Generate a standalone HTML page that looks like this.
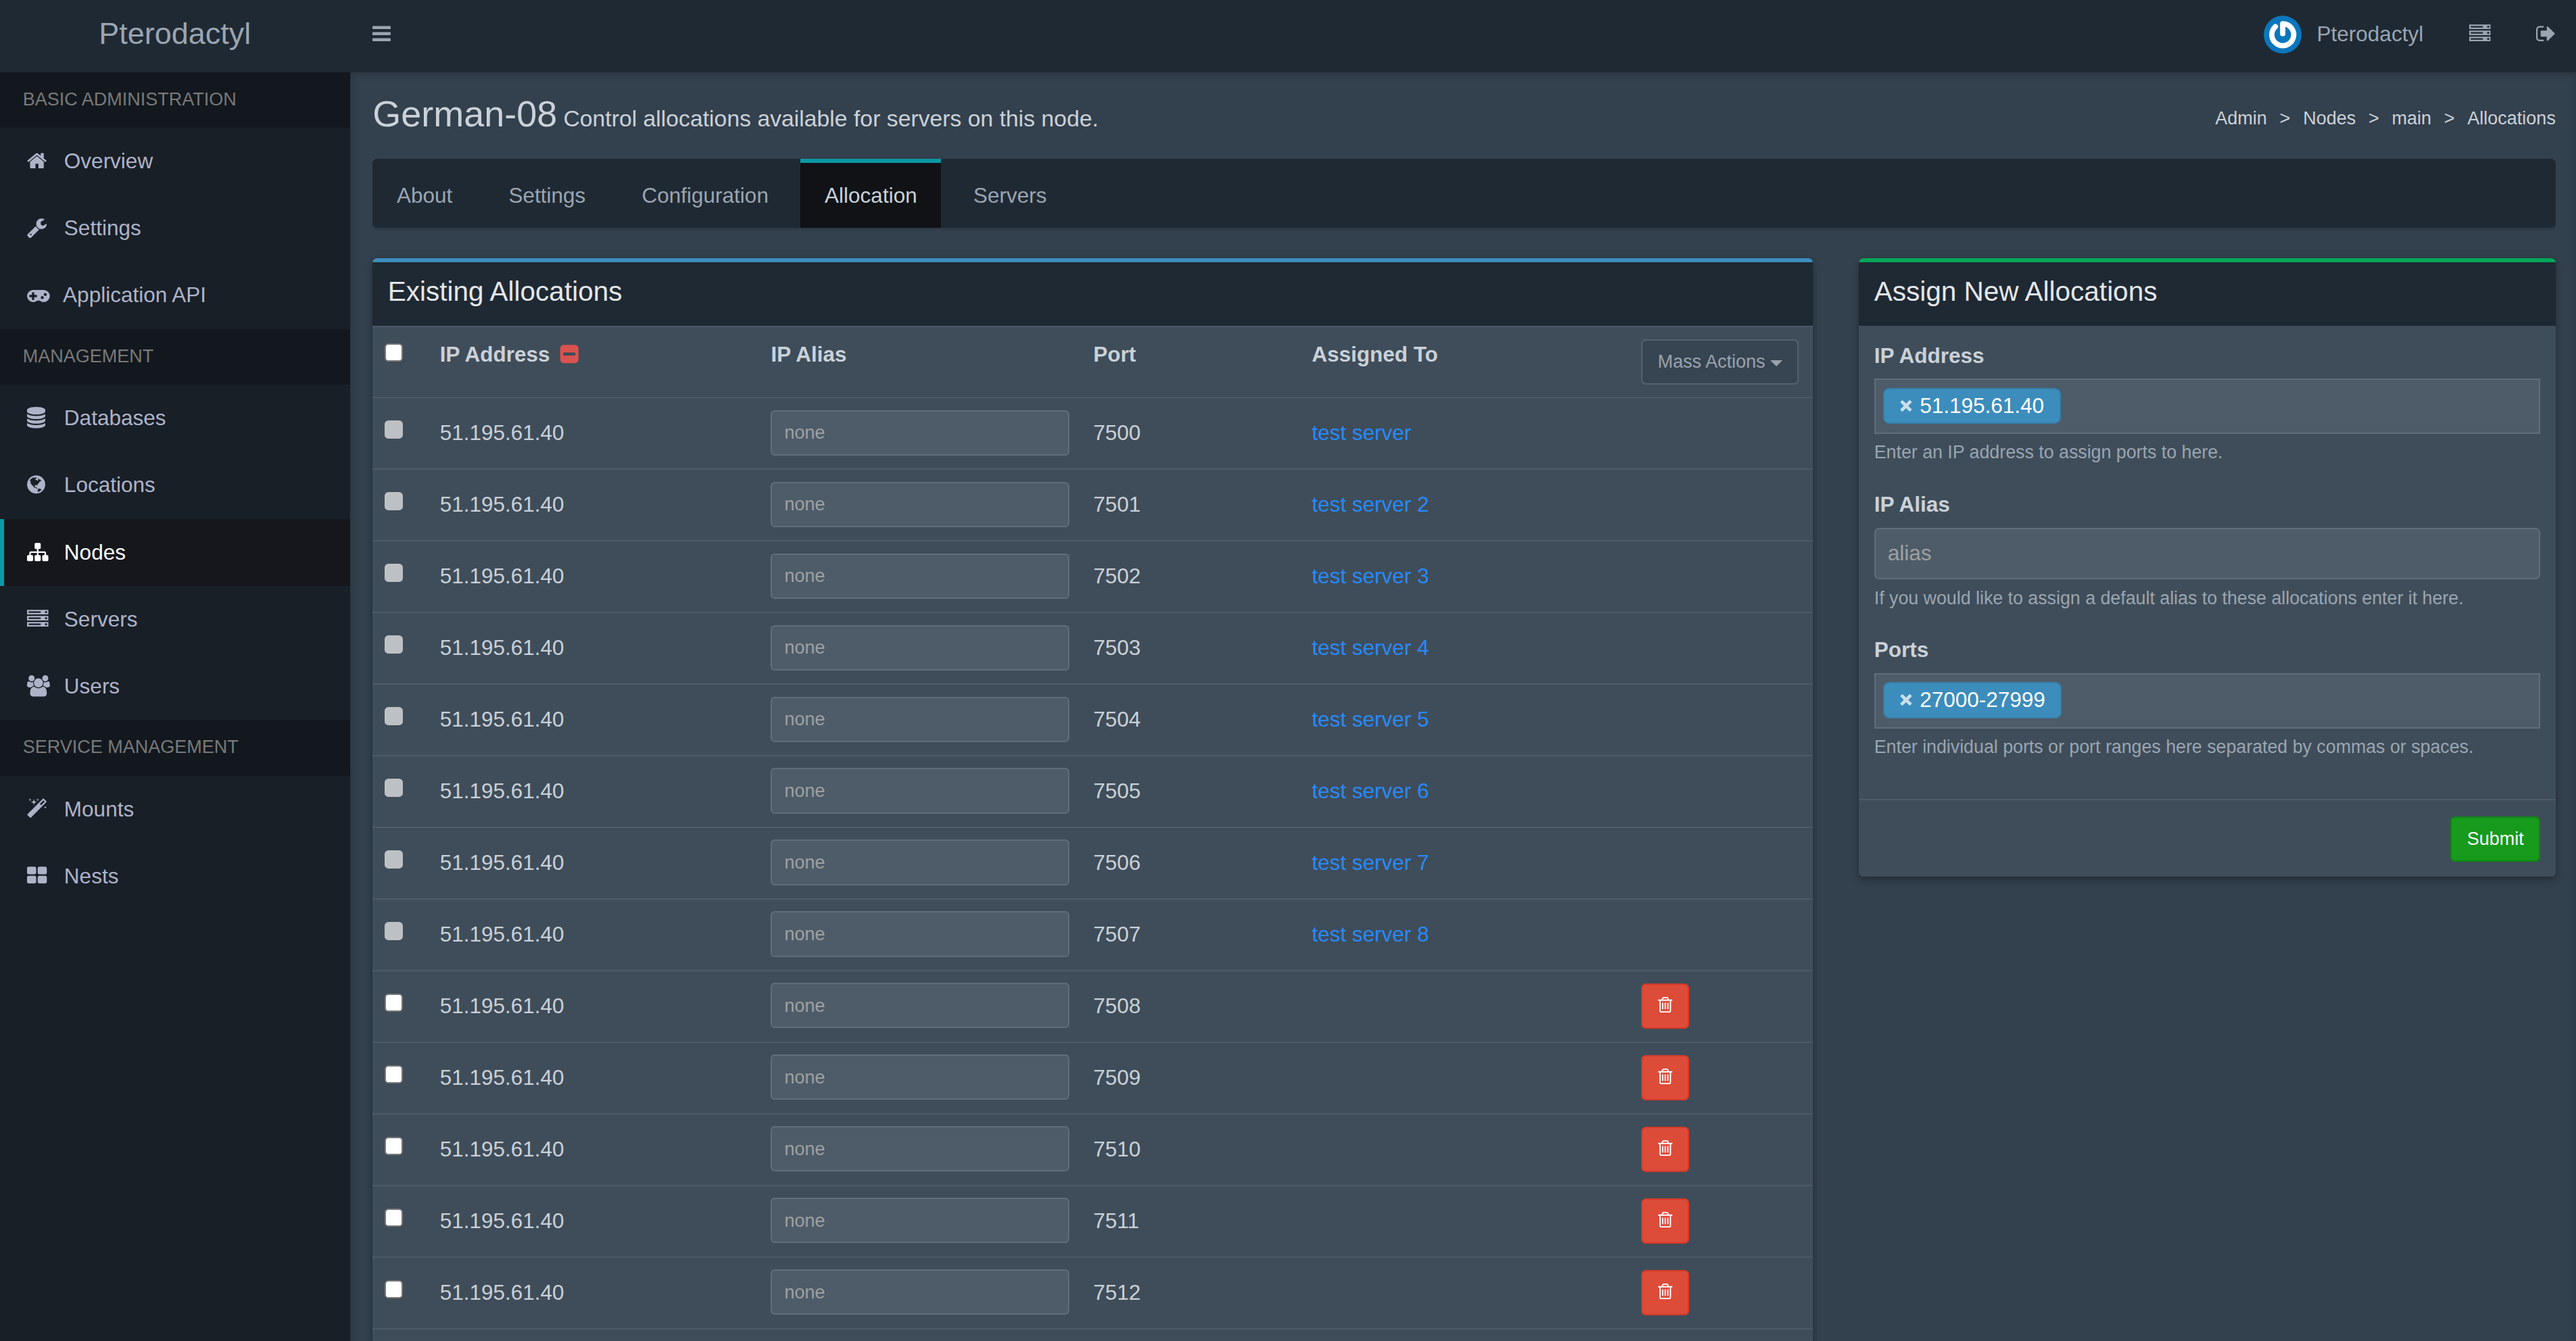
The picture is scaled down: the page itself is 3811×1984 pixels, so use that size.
<!DOCTYPE html>
<html lang="en"><head><meta charset="utf-8"><title>Pterodactyl - German-08: Allocations</title>
<style>
*{box-sizing:border-box}
html{zoom:2.25;background:#33404d;overflow:hidden}
body{margin:0;font-family:"Liberation Sans",Arial,sans-serif;font-size:14px;line-height:1.42857143;color:#cad1d8;background:#33404d;overflow:hidden;width:100%;height:881.7px;position:relative}
a{text-decoration:none;color:inherit}
ul,ol{margin:0;padding:0;list-style:none}
.fa{display:inline-block;height:1em;vertical-align:-0.142857em;fill:currentColor;overflow:visible}
.wrapper{position:absolute;left:0;top:-2.67px;width:1695.4px;height:900px}
.main-header{position:absolute;left:0;top:0;width:100%;height:50px;background:#1f2933;z-index:5}
.logo{position:absolute;left:0;top:0;width:230px;height:50px;line-height:50px;font-size:20px;text-align:center;color:#9aa5b1;padding:0 10px;display:block}
.navbar{position:absolute;left:230px;right:0;top:0;height:50px}
.sidebar-toggle{float:left;padding:15px 15px;color:#9aa5b1;font-size:14px;line-height:20px;display:block}
.navbar-custom-menu{float:right}
.nav>li{float:left}
.nav>li>a{display:block;padding:15px 15px;line-height:20px;color:#9aa5b1}
.user-image{float:left;width:25px;height:25px;border-radius:50%;margin-right:10px;margin-top:-2px}
.main-sidebar{position:absolute;left:0;top:50px;width:230px;bottom:0;background:#181f27}
.sidebar-menu>li.header{padding:10px 25px 10px 15px;font-size:12px;line-height:16.78px;color:#797979;background:rgba(14,17,21,0.51)}
.sidebar-menu>li>a{display:block;line-height:20.05px;padding:12px 5px 12px 15px;border-left:3px solid transparent;color:#aeb3c8}
.sidebar-menu>li.active>a{border-left-color:#099aa5;color:#fff;background:#15171c}
.sidebar-menu .mi{width:20px !important;margin-right:0.6px}
.content-wrapper{position:absolute;left:230px;top:50px;right:0;bottom:0;background:#33404d;box-shadow:inset 0 0 6px rgba(0,0,0,.25)}
.content-header{position:relative;padding:14.5px 15px 1.39px 15px}
.content-header>h1{margin:0;font-size:24px;font-weight:400;line-height:1.1;color:#cad1d8}
.content-header>h1>small{font-size:15px;display:inline-block;padding-left:4px;font-weight:300;color:#cad1d8;line-height:1}
.breadcrumb{position:absolute;top:15px;right:10px;font-size:12px;padding:7px 5px;line-height:1.42857143}
.breadcrumb>li{display:inline-block;color:#cad1d8}
.breadcrumb>li+li:before{content:'>\00a0';padding:0 5px;color:#cad1d8}
.content{padding:15px}
.nav-tabs-custom{margin-bottom:20px;background:#1f2933;border-radius:3px;box-shadow:0 1px 1px rgba(0,0,0,.1);overflow:hidden}
.nav-tabs{display:block}.nav-tabs:after{content:'';display:block;clear:both}
.nav-tabs>li{float:left;border-top:3px solid transparent;margin-right:5.2px}
.nav-tabs>li>a{display:block;padding:10.45px 15px;margin:0;border:1px solid transparent;color:#9aa5b1;line-height:1.42857143}
.nav-tabs>li.active{border-top-color:#099aa5}
.nav-tabs>li.active>a{background:#101216;color:#cad1d8}
.row{margin:0 -15px}
.row:after{content:"";display:block;clear:both}
.col8{float:left;width:66.66666667%;padding:0 15px}
.col4{float:left;width:33.33333333%;padding:0 15px 0 15.4px}
.box{position:relative;background:#3f4d5a;border-top:3px solid #1f2933;border-radius:3px;margin-bottom:20px;box-shadow:0 1px 3px rgba(0,0,0,.2), 0 3px 6px rgba(0,0,0,.14)}
.box.box-primary{border-top-color:#3c8dbc}
.box.box-success{border-top-color:#00a65a}
.box-header{height:41.65px;padding:10px;background:#1f2933;color:#e4e7eb;display:block;position:relative}
.box-title{display:inline-block;font-size:18px;margin:0;line-height:1;font-weight:400}
.box-body{padding:9.75px 10px 10px}
.box-body.nopad{padding:0}
.box-footer{border-top:1px solid #4d5b69;padding:10.4px 10px 10px;background:#3f4d5a;border-radius:0 0 3px 3px}
.box-footer:after{content:"";display:block;clear:both}
.pull-right{float:right}
table.table{width:100%;border-collapse:collapse;border-spacing:0;table-layout:fixed}
.table th,.table td{padding:8px;line-height:1.42857143;border-top:1px solid #4d5b69;text-align:left}
.table th{vertical-align:top;font-weight:700}
.table td{vertical-align:middle}
.form-control{display:block;width:100%;height:34px;padding:6px 12px 6px 8px;font-size:14px;line-height:1.42857143;background:#4e5c69;border:1px solid #606d7b;border-radius:3px;color:#cad1d8}
.input-sm{height:29.8px;padding:5px 10px 5px 8px;font-size:12px;line-height:1.5;border-radius:2.6px;position:relative;top:-0.45px}
.ph{color:#a0a0a0}
.btn{display:inline-block;font-weight:400;padding:6px 12px;font-size:14px;line-height:1.42857143;border:1px solid transparent;border-radius:3px;text-align:center;white-space:nowrap;vertical-align:middle}
.btn-sm{padding:5px 10px;font-size:12px;line-height:1.5}
.btn-default{background:#33404d;border-color:#606d7b;color:#cad1d8;opacity:.65}
.btn-danger{background:#dd4b39;border-color:#d73925;color:#fff}
.btn-success{background:#189a1c;border-color:#0f8513;color:#fff}
.caret{display:inline-block;width:0;height:0;margin-left:0;vertical-align:middle;border-top:4px solid;border-right:4px solid transparent;border-left:4px solid transparent}
.lnk{color:#288afb}
.cb{display:block;width:11.85px;height:11.85px;border:1px solid #767676;border-radius:2.5px;background:#fff}th .cb{margin-top:2.75px}td .cb{margin-bottom:4.9px}
.cb.dis{background:#bdc0c5;border-color:#bdc0c5}
label{display:inline-block;font-weight:700;margin-bottom:5px;color:#cad1d8}
.form-group{margin-bottom:15.8px}
p{margin:3.8px 0 10px}.select2+p{margin-top:3.7px}
.small{font-size:85%}
.text-muted{color:#9aa5b1}
.select2{height:36.4px;background:#4e5c69;border:1px solid #606d7b;padding:0 5px 5px 5px;overflow:hidden}
.choice{float:left;background:#3c8dbc;border:1px solid #367fa9;border-radius:4px;padding:1.05px 10px;color:#fff;margin-right:5px;margin-top:5.1px}
.rm{margin-right:5px;color:rgba(255,255,255,.7);font-weight:700;-webkit-text-stroke:0.45px rgba(255,255,255,.7)}
.fw{width:1.28571429em !important;text-align:center}

.w0{width:36.2px}.w1{width:217.6px}.w2{width:212px}.w3{width:143.6px}.w4{width:216.5px}.w5{width:120.8px}
.table tr{height:47.11px}

.up{position:relative;top:-0.3px}
.table tr.hr{height:46.67px}
.btn-danger.btn-sm{padding:5px 10.2px}

</style></head>
<body>
<div class="wrapper">
<header class="main-header">
  <a class="logo"><span>Pterodactyl</span></a>
  <nav class="navbar">
    <a class="sidebar-toggle"><svg class="fa " preserveAspectRatio="xMinYMid meet" style="width:0.8571em;" viewBox="0 -1536 1536 1792"><path transform="scale(1,-1)" d="M1536 192v-128q0 -26 -19 -45t-45 -19h-1408q-26 0 -45 19t-19 45v128q0 26 19 45t45 19h1408q26 0 45 -19t19 -45zM1536 704v-128q0 -26 -19 -45t-45 -19h-1408q-26 0 -45 19t-19 45v128q0 26 19 45t45 19h1408q26 0 45 -19t19 -45zM1536 1216v-128q0 -26 -19 -45 t-45 -19h-1408q-26 0 -45 19t-19 45v128q0 26 19 45t45 19h1408q26 0 45 -19t19 -45z"/></svg></a>
    <div class="navbar-custom-menu"><ul class="nav">
      <li class="user-menu"><a><svg class="user-image" viewBox="0 0 50 50"><circle cx="25" cy="25" r="25" fill="#0b76bc"/><path d="M25 23.7 V10.8 A14.4 14.4 0 1 1 15.4 14.5" stroke="#fff" stroke-width="7" stroke-linecap="round" stroke-linejoin="round" fill="none"/></svg><span>Pterodactyl</span></a></li>
      <li><a><svg class="fa " preserveAspectRatio="xMinYMid meet" style="width:1.0000em;" viewBox="0 -1536 1792 1792"><path transform="scale(1,-1)" d="M128 128h1024v128h-1024v-128zM128 640h1024v128h-1024v-128zM1696 192q0 40 -28 68t-68 28t-68 -28t-28 -68t28 -68t68 -28t68 28t28 68zM128 1152h1024v128h-1024v-128zM1696 704q0 40 -28 68t-68 28t-68 -28t-28 -68t28 -68t68 -28t68 28t28 68zM1696 1216 q0 40 -28 68t-68 28t-68 -28t-28 -68t28 -68t68 -28t68 28t28 68zM1792 384v-384h-1792v384h1792zM1792 896v-384h-1792v384h1792zM1792 1408v-384h-1792v384h1792z"/></svg></a></li>
      <li><a><svg class="fa " preserveAspectRatio="xMinYMid meet" style="width:0.9286em;" viewBox="0 -1536 1664 1792"><path transform="scale(1,-1)" d="M640 96q0 -4 1 -20t0.5 -26.5t-3 -23.5t-10 -19.5t-20.5 -6.5h-320q-119 0 -203.5 84.5t-84.5 203.5v704q0 119 84.5 203.5t203.5 84.5h320q13 0 22.5 -9.5t9.5 -22.5q0 -4 1 -20t0.5 -26.5t-3 -23.5t-10 -19.5t-20.5 -6.5h-320q-66 0 -113 -47t-47 -113v-704 q0 -66 47 -113t113 -47h288h11h13t11.5 -1t11.5 -3t8 -5.5t7 -9t2 -13.5zM1568 640q0 -26 -19 -45l-544 -544q-19 -19 -45 -19t-45 19t-19 45v288h-448q-26 0 -45 19t-19 45v384q0 26 19 45t45 19h448v288q0 26 19 45t45 19t45 -19l544 -544q19 -19 19 -45z"/></svg></a></li>
    </ul></div>
  </nav>
</header>
<aside class="main-sidebar"><ul class="sidebar-menu"><li class="header">BASIC ADMINISTRATION</li><li class=""><a><svg class="fa mi" preserveAspectRatio="xMinYMid meet" style="width:0.9286em;" viewBox="0 -1536 1664 1792"><path transform="scale(1,-1)" d="M1408 544v-480q0 -26 -19 -45t-45 -19h-384v384h-256v-384h-384q-26 0 -45 19t-19 45v480q0 1 0.5 3t0.5 3l575 474l575 -474q1 -2 1 -6zM1631 613l-62 -74q-8 -9 -21 -11h-3q-13 0 -21 7l-692 577l-692 -577q-12 -8 -24 -7q-13 2 -21 11l-62 74q-8 10 -7 23.5t11 21.5 l719 599q32 26 76 26t76 -26l244 -204v195q0 14 9 23t23 9h192q14 0 23 -9t9 -23v-408l219 -182q10 -8 11 -21.5t-7 -23.5z"/></svg> <span>Overview</span></a></li><li class=""><a><svg class="fa mi" preserveAspectRatio="xMinYMid meet" style="width:0.9286em;" viewBox="0 -1536 1664 1792"><path transform="scale(1,-1)" d="M384 64q0 26 -19 45t-45 19t-45 -19t-19 -45t19 -45t45 -19t45 19t19 45zM1028 484l-682 -682q-37 -37 -90 -37q-52 0 -91 37l-106 108q-38 36 -38 90q0 53 38 91l681 681q39 -98 114.5 -173.5t173.5 -114.5zM1662 919q0 -39 -23 -106q-47 -134 -164.5 -217.5 t-258.5 -83.5q-185 0 -316.5 131.5t-131.5 316.5t131.5 316.5t316.5 131.5q58 0 121.5 -16.5t107.5 -46.5q16 -11 16 -28t-16 -28l-293 -169v-224l193 -107q5 3 79 48.5t135.5 81t70.5 35.5q15 0 23.5 -10t8.5 -25z"/></svg> <span>Settings</span></a></li><li class=""><a><svg class="fa mi" preserveAspectRatio="xMinYMid meet" style="width:1.0714em;" viewBox="0 -1536 1920 1792"><path transform="scale(1,-1)" d="M832 448v128q0 14 -9 23t-23 9h-192v192q0 14 -9 23t-23 9h-128q-14 0 -23 -9t-9 -23v-192h-192q-14 0 -23 -9t-9 -23v-128q0 -14 9 -23t23 -9h192v-192q0 -14 9 -23t23 -9h128q14 0 23 9t9 23v192h192q14 0 23 9t9 23zM1408 384q0 53 -37.5 90.5t-90.5 37.5t-90.5 -37.5 t-37.5 -90.5t37.5 -90.5t90.5 -37.5t90.5 37.5t37.5 90.5zM1664 640q0 53 -37.5 90.5t-90.5 37.5t-90.5 -37.5t-37.5 -90.5t37.5 -90.5t90.5 -37.5t90.5 37.5t37.5 90.5zM1920 512q0 -212 -150 -362t-362 -150q-192 0 -338 128h-220q-146 -128 -338 -128q-212 0 -362 150 t-150 362t150 362t362 150h896q212 0 362 -150t150 -362z"/></svg> <span>Application API</span></a></li><li class="header">MANAGEMENT</li><li class=""><a><svg class="fa mi" preserveAspectRatio="xMinYMid meet" style="width:0.8571em;" viewBox="0 -1536 1536 1792"><path transform="scale(1,-1)" d="M768 768q237 0 443 43t325 127v-170q0 -69 -103 -128t-280 -93.5t-385 -34.5t-385 34.5t-280 93.5t-103 128v170q119 -84 325 -127t443 -43zM768 0q237 0 443 43t325 127v-170q0 -69 -103 -128t-280 -93.5t-385 -34.5t-385 34.5t-280 93.5t-103 128v170q119 -84 325 -127 t443 -43zM768 384q237 0 443 43t325 127v-170q0 -69 -103 -128t-280 -93.5t-385 -34.5t-385 34.5t-280 93.5t-103 128v170q119 -84 325 -127t443 -43zM768 1536q208 0 385 -34.5t280 -93.5t103 -128v-128q0 -69 -103 -128t-280 -93.5t-385 -34.5t-385 34.5t-280 93.5 t-103 128v128q0 69 103 128t280 93.5t385 34.5z"/></svg> <span>Databases</span></a></li><li class=""><a><svg class="fa mi" preserveAspectRatio="xMinYMid meet" style="width:0.8571em;" viewBox="0 -1536 1536 1792"><path transform="scale(1,-1)" d="M768 1408q209 0 385.5 -103t279.5 -279.5t103 -385.5t-103 -385.5t-279.5 -279.5t-385.5 -103t-385.5 103t-279.5 279.5t-103 385.5t103 385.5t279.5 279.5t385.5 103zM1042 887q-2 -1 -9.5 -9.5t-13.5 -9.5q2 0 4.5 5t5 11t3.5 7q6 7 22 15q14 6 52 12q34 8 51 -11 q-2 2 9.5 13t14.5 12q3 2 15 4.5t15 7.5l2 22q-12 -1 -17.5 7t-6.5 21q0 -2 -6 -8q0 7 -4.5 8t-11.5 -1t-9 -1q-10 3 -15 7.5t-8 16.5t-4 15q-2 5 -9.5 11t-9.5 10q-1 2 -2.5 5.5t-3 6.5t-4 5.5t-5.5 2.5t-7 -5t-7.5 -10t-4.5 -5q-3 2 -6 1.5t-4.5 -1t-4.5 -3t-5 -3.5 q-3 -2 -8.5 -3t-8.5 -2q15 5 -1 11q-10 4 -16 3q9 4 7.5 12t-8.5 14h5q-1 4 -8.5 8.5t-17.5 8.5t-13 6q-8 5 -34 9.5t-33 0.5q-5 -6 -4.5 -10.5t4 -14t3.5 -12.5q1 -6 -5.5 -13t-6.5 -12q0 -7 14 -15.5t10 -21.5q-3 -8 -16 -16t-16 -12q-5 -8 -1.5 -18.5t10.5 -16.5 q2 -2 1.5 -4t-3.5 -4.5t-5.5 -4t-6.5 -3.5l-3 -2q-11 -5 -20.5 6t-13.5 26q-7 25 -16 30q-23 8 -29 -1q-5 13 -41 26q-25 9 -58 4q6 1 0 15q-7 15 -19 12q3 6 4 17.5t1 13.5q3 13 12 23q1 1 7 8.5t9.5 13.5t0.5 6q35 -4 50 11q5 5 11.5 17t10.5 17q9 6 14 5.5t14.5 -5.5 t14.5 -5q14 -1 15.5 11t-7.5 20q12 -1 3 17q-4 7 -8 9q-12 4 -27 -5q-8 -4 2 -8q-1 1 -9.5 -10.5t-16.5 -17.5t-16 5q-1 1 -5.5 13.5t-9.5 13.5q-8 0 -16 -15q3 8 -11 15t-24 8q19 12 -8 27q-7 4 -20.5 5t-19.5 -4q-5 -7 -5.5 -11.5t5 -8t10.5 -5.5t11.5 -4t8.5 -3 q14 -10 8 -14q-2 -1 -8.5 -3.5t-11.5 -4.5t-6 -4q-3 -4 0 -14t-2 -14q-5 5 -9 17.5t-7 16.5q7 -9 -25 -6l-10 1q-4 0 -16 -2t-20.5 -1t-13.5 8q-4 8 0 20q1 4 4 2q-4 3 -11 9.5t-10 8.5q-46 -15 -94 -41q6 -1 12 1q5 2 13 6.5t10 5.5q34 14 42 7l5 5q14 -16 20 -25 q-7 4 -30 1q-20 -6 -22 -12q7 -12 5 -18q-4 3 -11.5 10t-14.5 11t-15 5q-16 0 -22 -1q-146 -80 -235 -222q7 -7 12 -8q4 -1 5 -9t2.5 -11t11.5 3q9 -8 3 -19q1 1 44 -27q19 -17 21 -21q3 -11 -10 -18q-1 2 -9 9t-9 4q-3 -5 0.5 -18.5t10.5 -12.5q-7 0 -9.5 -16t-2.5 -35.5 t-1 -23.5l2 -1q-3 -12 5.5 -34.5t21.5 -19.5q-13 -3 20 -43q6 -8 8 -9q3 -2 12 -7.5t15 -10t10 -10.5q4 -5 10 -22.5t14 -23.5q-2 -6 9.5 -20t10.5 -23q-1 0 -2.5 -1t-2.5 -1q3 -7 15.5 -14t15.5 -13q1 -3 2 -10t3 -11t8 -2q2 20 -24 62q-15 25 -17 29q-3 5 -5.5 15.5 t-4.5 14.5q2 0 6 -1.5t8.5 -3.5t7.5 -4t2 -3q-3 -7 2 -17.5t12 -18.5t17 -19t12 -13q6 -6 14 -19.5t0 -13.5q9 0 20 -10.5t17 -19.5q5 -8 8 -26t5 -24q2 -7 8.5 -13.5t12.5 -9.5l16 -8t13 -7q5 -2 18.5 -10.5t21.5 -11.5q10 -4 16 -4t14.5 2.5t13.5 3.5q15 2 29 -15t21 -21 q36 -19 55 -11q-2 -1 0.5 -7.5t8 -15.5t9 -14.5t5.5 -8.5q5 -6 18 -15t18 -15q6 4 7 9q-3 -8 7 -20t18 -10q14 3 14 32q-31 -15 -49 18q0 1 -2.5 5.5t-4 8.5t-2.5 8.5t0 7.5t5 3q9 0 10 3.5t-2 12.5t-4 13q-1 8 -11 20t-12 15q-5 -9 -16 -8t-16 9q0 -1 -1.5 -5.5t-1.5 -6.5 q-13 0 -15 1q1 3 2.5 17.5t3.5 22.5q1 4 5.5 12t7.5 14.5t4 12.5t-4.5 9.5t-17.5 2.5q-19 -1 -26 -20q-1 -3 -3 -10.5t-5 -11.5t-9 -7q-7 -3 -24 -2t-24 5q-13 8 -22.5 29t-9.5 37q0 10 2.5 26.5t3 25t-5.5 24.5q3 2 9 9.5t10 10.5q2 1 4.5 1.5t4.5 0t4 1.5t3 6q-1 1 -4 3 q-3 3 -4 3q7 -3 28.5 1.5t27.5 -1.5q15 -11 22 2q0 1 -2.5 9.5t-0.5 13.5q5 -27 29 -9q3 -3 15.5 -5t17.5 -5q3 -2 7 -5.5t5.5 -4.5t5 0.5t8.5 6.5q10 -14 12 -24q11 -40 19 -44q7 -3 11 -2t4.5 9.5t0 14t-1.5 12.5l-1 8v18l-1 8q-15 3 -18.5 12t1.5 18.5t15 18.5q1 1 8 3.5 t15.5 6.5t12.5 8q21 19 15 35q7 0 11 9q-1 0 -5 3t-7.5 5t-4.5 2q9 5 2 16q5 3 7.5 11t7.5 10q9 -12 21 -2q8 8 1 16q5 7 20.5 10.5t18.5 9.5q7 -2 8 2t1 12t3 12q4 5 15 9t13 5l17 11q3 4 0 4q18 -2 31 11q10 11 -6 20q3 6 -3 9.5t-15 5.5q3 1 11.5 0.5t10.5 1.5 q15 10 -7 16q-17 5 -43 -12zM879 10q206 36 351 189q-3 3 -12.5 4.5t-12.5 3.5q-18 7 -24 8q1 7 -2.5 13t-8 9t-12.5 8t-11 7q-2 2 -7 6t-7 5.5t-7.5 4.5t-8.5 2t-10 -1l-3 -1q-3 -1 -5.5 -2.5t-5.5 -3t-4 -3t0 -2.5q-21 17 -36 22q-5 1 -11 5.5t-10.5 7t-10 1.5t-11.5 -7 q-5 -5 -6 -15t-2 -13q-7 5 0 17.5t2 18.5q-3 6 -10.5 4.5t-12 -4.5t-11.5 -8.5t-9 -6.5t-8.5 -5.5t-8.5 -7.5q-3 -4 -6 -12t-5 -11q-2 4 -11.5 6.5t-9.5 5.5q2 -10 4 -35t5 -38q7 -31 -12 -48q-27 -25 -29 -40q-4 -22 12 -26q0 -7 -8 -20.5t-7 -21.5q0 -6 2 -16z"/></svg> <span>Locations</span></a></li><li class="active"><a><svg class="fa mi" preserveAspectRatio="xMinYMid meet" style="width:1.0000em;" viewBox="0 -1536 1792 1792"><path transform="scale(1,-1)" d="M1792 288v-320q0 -40 -28 -68t-68 -28h-320q-40 0 -68 28t-28 68v320q0 40 28 68t68 28h96v192h-512v-192h96q40 0 68 -28t28 -68v-320q0 -40 -28 -68t-68 -28h-320q-40 0 -68 28t-28 68v320q0 40 28 68t68 28h96v192h-512v-192h96q40 0 68 -28t28 -68v-320 q0 -40 -28 -68t-68 -28h-320q-40 0 -68 28t-28 68v320q0 40 28 68t68 28h96v192q0 52 38 90t90 38h512v192h-96q-40 0 -68 28t-28 68v320q0 40 28 68t68 28h320q40 0 68 -28t28 -68v-320q0 -40 -28 -68t-68 -28h-96v-192h512q52 0 90 -38t38 -90v-192h96q40 0 68 -28t28 -68 z"/></svg> <span>Nodes</span></a></li><li class=""><a><svg class="fa mi" preserveAspectRatio="xMinYMid meet" style="width:1.0000em;" viewBox="0 -1536 1792 1792"><path transform="scale(1,-1)" d="M128 128h1024v128h-1024v-128zM128 640h1024v128h-1024v-128zM1696 192q0 40 -28 68t-68 28t-68 -28t-28 -68t28 -68t68 -28t68 28t28 68zM128 1152h1024v128h-1024v-128zM1696 704q0 40 -28 68t-68 28t-68 -28t-28 -68t28 -68t68 -28t68 28t28 68zM1696 1216 q0 40 -28 68t-68 28t-68 -28t-28 -68t28 -68t68 -28t68 28t28 68zM1792 384v-384h-1792v384h1792zM1792 896v-384h-1792v384h1792zM1792 1408v-384h-1792v384h1792z"/></svg> <span>Servers</span></a></li><li class=""><a><svg class="fa mi" preserveAspectRatio="xMinYMid meet" style="width:1.0714em;" viewBox="0 -1536 1920 1792"><path transform="scale(1,-1)" d="M593 640q-162 -5 -265 -128h-134q-82 0 -138 40.5t-56 118.5q0 353 124 353q6 0 43.5 -21t97.5 -42.5t119 -21.5q67 0 133 23q-5 -37 -5 -66q0 -139 81 -256zM1664 3q0 -120 -73 -189.5t-194 -69.5h-874q-121 0 -194 69.5t-73 189.5q0 53 3.5 103.5t14 109t26.5 108.5 t43 97.5t62 81t85.5 53.5t111.5 20q10 0 43 -21.5t73 -48t107 -48t135 -21.5t135 21.5t107 48t73 48t43 21.5q61 0 111.5 -20t85.5 -53.5t62 -81t43 -97.5t26.5 -108.5t14 -109t3.5 -103.5zM640 1280q0 -106 -75 -181t-181 -75t-181 75t-75 181t75 181t181 75t181 -75 t75 -181zM1344 896q0 -159 -112.5 -271.5t-271.5 -112.5t-271.5 112.5t-112.5 271.5t112.5 271.5t271.5 112.5t271.5 -112.5t112.5 -271.5zM1920 671q0 -78 -56 -118.5t-138 -40.5h-134q-103 123 -265 128q81 117 81 256q0 29 -5 66q66 -23 133 -23q59 0 119 21.5t97.5 42.5 t43.5 21q124 0 124 -353zM1792 1280q0 -106 -75 -181t-181 -75t-181 75t-75 181t75 181t181 75t181 -75t75 -181z"/></svg> <span>Users</span></a></li><li class="header">SERVICE MANAGEMENT</li><li class=""><a><svg class="fa mi" preserveAspectRatio="xMinYMid meet" style="width:0.9286em;" viewBox="0 -1536 1664 1792"><path transform="scale(1,-1)" d="M1190 955l293 293l-107 107l-293 -293zM1637 1248q0 -27 -18 -45l-1286 -1286q-18 -18 -45 -18t-45 18l-198 198q-18 18 -18 45t18 45l1286 1286q18 18 45 18t45 -18l198 -198q18 -18 18 -45zM286 1438l98 -30l-98 -30l-30 -98l-30 98l-98 30l98 30l30 98zM636 1276 l196 -60l-196 -60l-60 -196l-60 196l-196 60l196 60l60 196zM1566 798l98 -30l-98 -30l-30 -98l-30 98l-98 30l98 30l30 98zM926 1438l98 -30l-98 -30l-30 -98l-30 98l-98 30l98 30l30 98z"/></svg> <span>Mounts</span></a></li><li class=""><a><svg class="fa mi" preserveAspectRatio="xMinYMid meet" style="width:0.9286em;" viewBox="0 -1536 1664 1792"><path transform="scale(1,-1)" d="M768 512v-384q0 -52 -38 -90t-90 -38h-512q-52 0 -90 38t-38 90v384q0 52 38 90t90 38h512q52 0 90 -38t38 -90zM768 1280v-384q0 -52 -38 -90t-90 -38h-512q-52 0 -90 38t-38 90v384q0 52 38 90t90 38h512q52 0 90 -38t38 -90zM1664 512v-384q0 -52 -38 -90t-90 -38 h-512q-52 0 -90 38t-38 90v384q0 52 38 90t90 38h512q52 0 90 -38t38 -90zM1664 1280v-384q0 -52 -38 -90t-90 -38h-512q-52 0 -90 38t-38 90v384q0 52 38 90t90 38h512q52 0 90 -38t38 -90z"/></svg> <span>Nests</span></a></li></ul></aside>
<div class="content-wrapper">
  <section class="content-header">
    <h1>German-08<small>Control allocations available for servers on this node.</small></h1>
    <ol class="breadcrumb"><li><a>Admin</a></li> <li><a>Nodes</a></li> <li><a>main</a></li> <li class="active">Allocations</li></ol>
  </section>
  <section class="content">
    <div class="nav-tabs-custom"><ul class="nav-tabs">
      <li><a>About</a></li><li><a>Settings</a></li><li><a>Configuration</a></li><li class="active"><a>Allocation</a></li><li><a>Servers</a></li>
    </ul></div>
    <div class="row">
      <div class="col8">
        <div class="box box-primary">
          <div class="box-header"><h3 class="box-title">Existing Allocations</h3></div>
          <div class="box-body nopad">
            <table class="table">
              <colgroup><col class="w0"><col class="w1"><col class="w2"><col class="w3"><col class="w4"><col class="w5"></colgroup>
              <tr class="hr"><th class="c0"><span class="cb"></span></th><th>IP Address <svg class="fa fw" preserveAspectRatio="xMidYMid meet" style="width:0.8571em;color:#d9534f" viewBox="0 -1536 1536 1792"><path transform="scale(1,-1)" d="M1280 576v128q0 26 -19 45t-45 19h-896q-26 0 -45 -19t-19 -45v-128q0 -26 19 -45t45 -19h896q26 0 45 19t19 45zM1536 1120v-960q0 -119 -84.5 -203.5t-203.5 -84.5h-960q-119 0 -203.5 84.5t-84.5 203.5v960q0 119 84.5 203.5t203.5 84.5h960q119 0 203.5 -84.5 t84.5 -203.5z"/></svg></th><th>IP Alias</th><th>Port</th><th>Assigned To</th><th><span class="btn btn-sm btn-default">Mass Actions <span class="caret"></span></span></th></tr>
<tr><td class="c0"><span class="cb dis"></span></td><td><span class="up">51.195.61.40</span></td><td><div class="form-control input-sm"><span class="ph">none</span></div></td><td><span class="up">7500</span></td><td><a class="lnk up">test server</a></td><td></td></tr>
<tr><td class="c0"><span class="cb dis"></span></td><td><span class="up">51.195.61.40</span></td><td><div class="form-control input-sm"><span class="ph">none</span></div></td><td><span class="up">7501</span></td><td><a class="lnk up">test server 2</a></td><td></td></tr>
<tr><td class="c0"><span class="cb dis"></span></td><td><span class="up">51.195.61.40</span></td><td><div class="form-control input-sm"><span class="ph">none</span></div></td><td><span class="up">7502</span></td><td><a class="lnk up">test server 3</a></td><td></td></tr>
<tr><td class="c0"><span class="cb dis"></span></td><td><span class="up">51.195.61.40</span></td><td><div class="form-control input-sm"><span class="ph">none</span></div></td><td><span class="up">7503</span></td><td><a class="lnk up">test server 4</a></td><td></td></tr>
<tr><td class="c0"><span class="cb dis"></span></td><td><span class="up">51.195.61.40</span></td><td><div class="form-control input-sm"><span class="ph">none</span></div></td><td><span class="up">7504</span></td><td><a class="lnk up">test server 5</a></td><td></td></tr>
<tr><td class="c0"><span class="cb dis"></span></td><td><span class="up">51.195.61.40</span></td><td><div class="form-control input-sm"><span class="ph">none</span></div></td><td><span class="up">7505</span></td><td><a class="lnk up">test server 6</a></td><td></td></tr>
<tr><td class="c0"><span class="cb dis"></span></td><td><span class="up">51.195.61.40</span></td><td><div class="form-control input-sm"><span class="ph">none</span></div></td><td><span class="up">7506</span></td><td><a class="lnk up">test server 7</a></td><td></td></tr>
<tr><td class="c0"><span class="cb dis"></span></td><td><span class="up">51.195.61.40</span></td><td><div class="form-control input-sm"><span class="ph">none</span></div></td><td><span class="up">7507</span></td><td><a class="lnk up">test server 8</a></td><td></td></tr>
<tr><td class="c0"><span class="cb"></span></td><td><span class="up">51.195.61.40</span></td><td><div class="form-control input-sm"><span class="ph">none</span></div></td><td><span class="up">7508</span></td><td></td><td><span class="btn btn-sm btn-danger"><svg class="fa " preserveAspectRatio="xMinYMid meet" style="width:0.7857em;position:relative;top:-0.6px" viewBox="0 -1536 1408 1792"><path transform="scale(1,-1)" d="M512 800v-576q0 -14 -9 -23t-23 -9h-64q-14 0 -23 9t-9 23v576q0 14 9 23t23 9h64q14 0 23 -9t9 -23zM768 800v-576q0 -14 -9 -23t-23 -9h-64q-14 0 -23 9t-9 23v576q0 14 9 23t23 9h64q14 0 23 -9t9 -23zM1024 800v-576q0 -14 -9 -23t-23 -9h-64q-14 0 -23 9t-9 23v576 q0 14 9 23t23 9h64q14 0 23 -9t9 -23zM1152 76v948h-896v-948q0 -22 7 -40.5t14.5 -27t10.5 -8.5h832q3 0 10.5 8.5t14.5 27t7 40.5zM480 1152h448l-48 117q-7 9 -17 11h-317q-10 -2 -17 -11zM1408 1120v-64q0 -14 -9 -23t-23 -9h-96v-948q0 -83 -47 -143.5t-113 -60.5h-832 q-66 0 -113 58.5t-47 141.5v952h-96q-14 0 -23 9t-9 23v64q0 14 9 23t23 9h309l70 167q15 37 54 63t79 26h320q40 0 79 -26t54 -63l70 -167h309q14 0 23 -9t9 -23z"/></svg></span></td></tr>
<tr><td class="c0"><span class="cb"></span></td><td><span class="up">51.195.61.40</span></td><td><div class="form-control input-sm"><span class="ph">none</span></div></td><td><span class="up">7509</span></td><td></td><td><span class="btn btn-sm btn-danger"><svg class="fa " preserveAspectRatio="xMinYMid meet" style="width:0.7857em;position:relative;top:-0.6px" viewBox="0 -1536 1408 1792"><path transform="scale(1,-1)" d="M512 800v-576q0 -14 -9 -23t-23 -9h-64q-14 0 -23 9t-9 23v576q0 14 9 23t23 9h64q14 0 23 -9t9 -23zM768 800v-576q0 -14 -9 -23t-23 -9h-64q-14 0 -23 9t-9 23v576q0 14 9 23t23 9h64q14 0 23 -9t9 -23zM1024 800v-576q0 -14 -9 -23t-23 -9h-64q-14 0 -23 9t-9 23v576 q0 14 9 23t23 9h64q14 0 23 -9t9 -23zM1152 76v948h-896v-948q0 -22 7 -40.5t14.5 -27t10.5 -8.5h832q3 0 10.5 8.5t14.5 27t7 40.5zM480 1152h448l-48 117q-7 9 -17 11h-317q-10 -2 -17 -11zM1408 1120v-64q0 -14 -9 -23t-23 -9h-96v-948q0 -83 -47 -143.5t-113 -60.5h-832 q-66 0 -113 58.5t-47 141.5v952h-96q-14 0 -23 9t-9 23v64q0 14 9 23t23 9h309l70 167q15 37 54 63t79 26h320q40 0 79 -26t54 -63l70 -167h309q14 0 23 -9t9 -23z"/></svg></span></td></tr>
<tr><td class="c0"><span class="cb"></span></td><td><span class="up">51.195.61.40</span></td><td><div class="form-control input-sm"><span class="ph">none</span></div></td><td><span class="up">7510</span></td><td></td><td><span class="btn btn-sm btn-danger"><svg class="fa " preserveAspectRatio="xMinYMid meet" style="width:0.7857em;position:relative;top:-0.6px" viewBox="0 -1536 1408 1792"><path transform="scale(1,-1)" d="M512 800v-576q0 -14 -9 -23t-23 -9h-64q-14 0 -23 9t-9 23v576q0 14 9 23t23 9h64q14 0 23 -9t9 -23zM768 800v-576q0 -14 -9 -23t-23 -9h-64q-14 0 -23 9t-9 23v576q0 14 9 23t23 9h64q14 0 23 -9t9 -23zM1024 800v-576q0 -14 -9 -23t-23 -9h-64q-14 0 -23 9t-9 23v576 q0 14 9 23t23 9h64q14 0 23 -9t9 -23zM1152 76v948h-896v-948q0 -22 7 -40.5t14.5 -27t10.5 -8.5h832q3 0 10.5 8.5t14.5 27t7 40.5zM480 1152h448l-48 117q-7 9 -17 11h-317q-10 -2 -17 -11zM1408 1120v-64q0 -14 -9 -23t-23 -9h-96v-948q0 -83 -47 -143.5t-113 -60.5h-832 q-66 0 -113 58.5t-47 141.5v952h-96q-14 0 -23 9t-9 23v64q0 14 9 23t23 9h309l70 167q15 37 54 63t79 26h320q40 0 79 -26t54 -63l70 -167h309q14 0 23 -9t9 -23z"/></svg></span></td></tr>
<tr><td class="c0"><span class="cb"></span></td><td><span class="up">51.195.61.40</span></td><td><div class="form-control input-sm"><span class="ph">none</span></div></td><td><span class="up">7511</span></td><td></td><td><span class="btn btn-sm btn-danger"><svg class="fa " preserveAspectRatio="xMinYMid meet" style="width:0.7857em;position:relative;top:-0.6px" viewBox="0 -1536 1408 1792"><path transform="scale(1,-1)" d="M512 800v-576q0 -14 -9 -23t-23 -9h-64q-14 0 -23 9t-9 23v576q0 14 9 23t23 9h64q14 0 23 -9t9 -23zM768 800v-576q0 -14 -9 -23t-23 -9h-64q-14 0 -23 9t-9 23v576q0 14 9 23t23 9h64q14 0 23 -9t9 -23zM1024 800v-576q0 -14 -9 -23t-23 -9h-64q-14 0 -23 9t-9 23v576 q0 14 9 23t23 9h64q14 0 23 -9t9 -23zM1152 76v948h-896v-948q0 -22 7 -40.5t14.5 -27t10.5 -8.5h832q3 0 10.5 8.5t14.5 27t7 40.5zM480 1152h448l-48 117q-7 9 -17 11h-317q-10 -2 -17 -11zM1408 1120v-64q0 -14 -9 -23t-23 -9h-96v-948q0 -83 -47 -143.5t-113 -60.5h-832 q-66 0 -113 58.5t-47 141.5v952h-96q-14 0 -23 9t-9 23v64q0 14 9 23t23 9h309l70 167q15 37 54 63t79 26h320q40 0 79 -26t54 -63l70 -167h309q14 0 23 -9t9 -23z"/></svg></span></td></tr>
<tr><td class="c0"><span class="cb"></span></td><td><span class="up">51.195.61.40</span></td><td><div class="form-control input-sm"><span class="ph">none</span></div></td><td><span class="up">7512</span></td><td></td><td><span class="btn btn-sm btn-danger"><svg class="fa " preserveAspectRatio="xMinYMid meet" style="width:0.7857em;position:relative;top:-0.6px" viewBox="0 -1536 1408 1792"><path transform="scale(1,-1)" d="M512 800v-576q0 -14 -9 -23t-23 -9h-64q-14 0 -23 9t-9 23v576q0 14 9 23t23 9h64q14 0 23 -9t9 -23zM768 800v-576q0 -14 -9 -23t-23 -9h-64q-14 0 -23 9t-9 23v576q0 14 9 23t23 9h64q14 0 23 -9t9 -23zM1024 800v-576q0 -14 -9 -23t-23 -9h-64q-14 0 -23 9t-9 23v576 q0 14 9 23t23 9h64q14 0 23 -9t9 -23zM1152 76v948h-896v-948q0 -22 7 -40.5t14.5 -27t10.5 -8.5h832q3 0 10.5 8.5t14.5 27t7 40.5zM480 1152h448l-48 117q-7 9 -17 11h-317q-10 -2 -17 -11zM1408 1120v-64q0 -14 -9 -23t-23 -9h-96v-948q0 -83 -47 -143.5t-113 -60.5h-832 q-66 0 -113 58.5t-47 141.5v952h-96q-14 0 -23 9t-9 23v64q0 14 9 23t23 9h309l70 167q15 37 54 63t79 26h320q40 0 79 -26t54 -63l70 -167h309q14 0 23 -9t9 -23z"/></svg></span></td></tr>
<tr><td class="c0"><span class="cb"></span></td><td><span class="up">51.195.61.40</span></td><td><div class="form-control input-sm"><span class="ph">none</span></div></td><td><span class="up">7513</span></td><td></td><td><span class="btn btn-sm btn-danger"><svg class="fa " preserveAspectRatio="xMinYMid meet" style="width:0.7857em;position:relative;top:-0.6px" viewBox="0 -1536 1408 1792"><path transform="scale(1,-1)" d="M512 800v-576q0 -14 -9 -23t-23 -9h-64q-14 0 -23 9t-9 23v576q0 14 9 23t23 9h64q14 0 23 -9t9 -23zM768 800v-576q0 -14 -9 -23t-23 -9h-64q-14 0 -23 9t-9 23v576q0 14 9 23t23 9h64q14 0 23 -9t9 -23zM1024 800v-576q0 -14 -9 -23t-23 -9h-64q-14 0 -23 9t-9 23v576 q0 14 9 23t23 9h64q14 0 23 -9t9 -23zM1152 76v948h-896v-948q0 -22 7 -40.5t14.5 -27t10.5 -8.5h832q3 0 10.5 8.5t14.5 27t7 40.5zM480 1152h448l-48 117q-7 9 -17 11h-317q-10 -2 -17 -11zM1408 1120v-64q0 -14 -9 -23t-23 -9h-96v-948q0 -83 -47 -143.5t-113 -60.5h-832 q-66 0 -113 58.5t-47 141.5v952h-96q-14 0 -23 9t-9 23v64q0 14 9 23t23 9h309l70 167q15 37 54 63t79 26h320q40 0 79 -26t54 -63l70 -167h309q14 0 23 -9t9 -23z"/></svg></span></td></tr>

            </table>
          </div>
        </div>
      </div>
      <div class="col4">
        <div class="box box-success">
          <div class="box-header"><h3 class="box-title">Assign New Allocations</h3></div>
          <div class="box-body">
            <div class="form-group"><label>IP Address</label>
              <div><div class="select2"><span class="choice"><span class="rm">×</span>51.195.61.40</span></div>
              <p class="text-muted small">Enter an IP address to assign ports to here.</p></div></div>
            <div class="form-group"><label>IP Alias</label>
              <div><div class="form-control"><span class="ph">alias</span></div>
              <p class="text-muted small">If you would like to assign a default alias to these allocations enter it here.</p></div></div>
            <div class="form-group"><label>Ports</label>
              <div><div class="select2"><span class="choice"><span class="rm">×</span>27000-27999</span></div>
              <p class="text-muted small">Enter individual ports or port ranges here separated by commas or spaces.</p></div></div>
          </div>
          <div class="box-footer"><span class="btn btn-sm btn-success pull-right">Submit</span></div>
        </div>
      </div>
    </div>
  </section>
</div>
</div>
</body></html>
